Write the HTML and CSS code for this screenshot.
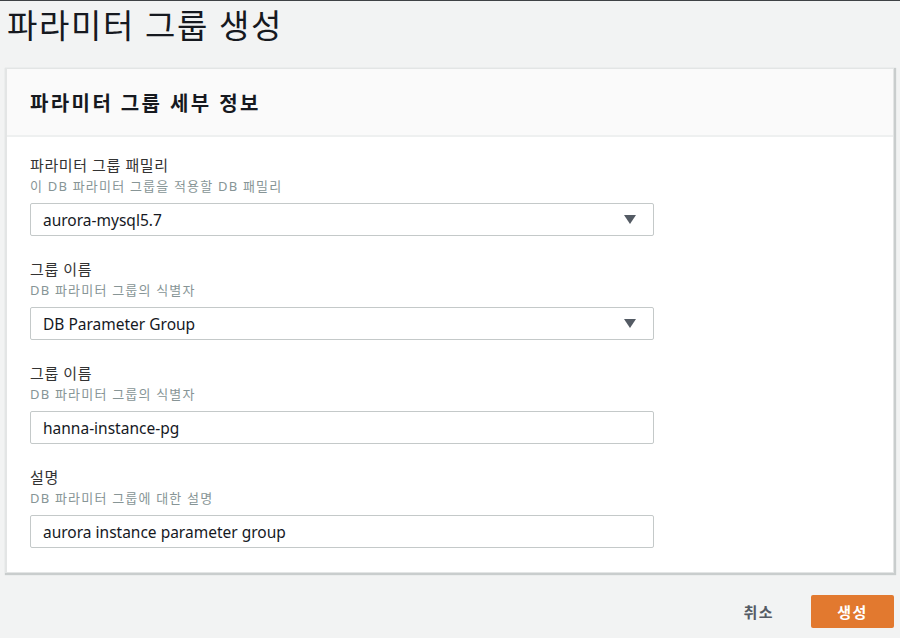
FILE: index.html
```html
<!DOCTYPE html>
<html lang="ko">
<head>
    <meta charset="UTF-8">
    <meta name="viewport" content="width=device-width, initial-scale=1.0">
    <title>파라미터 그룹 생성</title>
    <link rel="stylesheet" href="styles.css">
</head>
<body>
    <div class="page">
        <h1 class="title">파라미터 그룹 생성</h1>
        <div class="card">
            <div class="card-header">
                <h2 class="card-title">파라미터 그룹 세부 정보</h2>
            </div>
            <div class="card-body">
                <!--family-->
                <div class="field">
                    <div class="label">파라미터 그룹 패밀리</div>
                    <div class="desc">이 DB 파라미터 그룹을 적용할 DB 패밀리</div>
                    <div class="select">
                        <span>aurora-mysql5.7</span>
                        <svg class="caret" width="12" height="9" viewBox="0 0 12 9"><path d="M0 0h12L6 9z" fill="#545b64"/></svg>
                    </div>
                </div>
                <!--type-->
                <div class="field">
                    <div class="label">그룹 이름</div>
                    <div class="desc">DB 파라미터 그룹의 식별자</div>
                    <div class="select">
                        <span>DB Parameter Group</span>
                        <svg class="caret" width="12" height="9" viewBox="0 0 12 9"><path d="M0 0h12L6 9z" fill="#545b64"/></svg>
                    </div>
                </div>
                <!--name-->
                <div class="field">
                    <div class="label">그룹 이름</div>
                    <div class="desc">DB 파라미터 그룹의 식별자</div>
                    <div class="input">hanna-instance-pg</div>
                </div>
                <!--description-->
                <div class="field">
                    <div class="label">설명</div>
                    <div class="desc">DB 파라미터 그룹에 대한 설명</div>
                    <div class="input">aurora instance parameter group</div>
                </div>
            </div>
        </div>
        <div class="actions">
            <button class="btn-cancel">취소</button>
            <button class="btn-create">생성</button>
        </div>
    </div>
</body>
</html>
```

FILE: styles.css
```css
body{
    margin: 0;
    background-color: #f2f3f3;
    border-top: 1px solid #3f4245;
    font-family: "Noto Sans", "Noto Sans CJK KR", sans-serif;
    color: #16191f;
}
.page{
    padding: 0 6px 0 5px;
}
.title{
    margin: 0;
    padding: 4px 0 0 2px;
    height: 67px;
    box-sizing: border-box;
    font-size: 33px;
    font-weight: 400;
    line-height: 42px;
    letter-spacing: 1.6px;
    color: #16191f;
}
.card{
    background-color: #fff;
    border: 1px solid #e3e5e5;
    border-left-width: 2px;
    box-shadow: 1px 1px 1px 1px #c9cdcd;
}
.card-header{
    background-color: #fafafa;
    border-bottom: 2px solid #eef0f0;
    height: 68px;
    box-sizing: border-box;
    padding: 0 0 0 23px;
    display: flex;
    align-items: center;
}
.card-title{
    margin: 0;
    font-size: 20px;
    font-weight: 700;
    letter-spacing: 2.4px;
    color: #16191f;
}
.card-body{
    padding: 17px 23px 24px;
    display: flex;
    flex-direction: column;
    gap: 22px;
}
.field{
    width: 624px;
}
.label{
    font-size: 15px;
    line-height: 22px;
    letter-spacing: 0.6px;
    color: #333;
}
.desc{
    font-size: 13px;
    line-height: 20px;
    letter-spacing: 1.2px;
    color: #879596;
    margin-bottom: 7px;
}
.select, .input{
    height: 33px;
    box-sizing: border-box;
    border: 1px solid #c4c9c9;
    border-radius: 2px;
    padding: 0 17px 0 12px;
    display: flex;
    align-items: center;
    justify-content: space-between;
    font-size: 15.5px;
    color: #16191f;
}
.actions{
    display: flex;
    justify-content: flex-end;
    align-items: center;
    gap: 37px;
    padding-top: 22px;
}
.btn-cancel{
    background: none;
    border: none;
    font-family: inherit;
    font-size: 15px;
    font-weight: 700;
    letter-spacing: 1.5px;
    color: #545b64;
    padding: 0;
}
.btn-create{
    width: 83px;
    height: 33px;
    border: none;
    border-radius: 2px;
    background-color: #e2792f;
    color: #fff;
    font-family: inherit;
    font-size: 15px;
    font-weight: 700;
    letter-spacing: 1.5px;
}
```
